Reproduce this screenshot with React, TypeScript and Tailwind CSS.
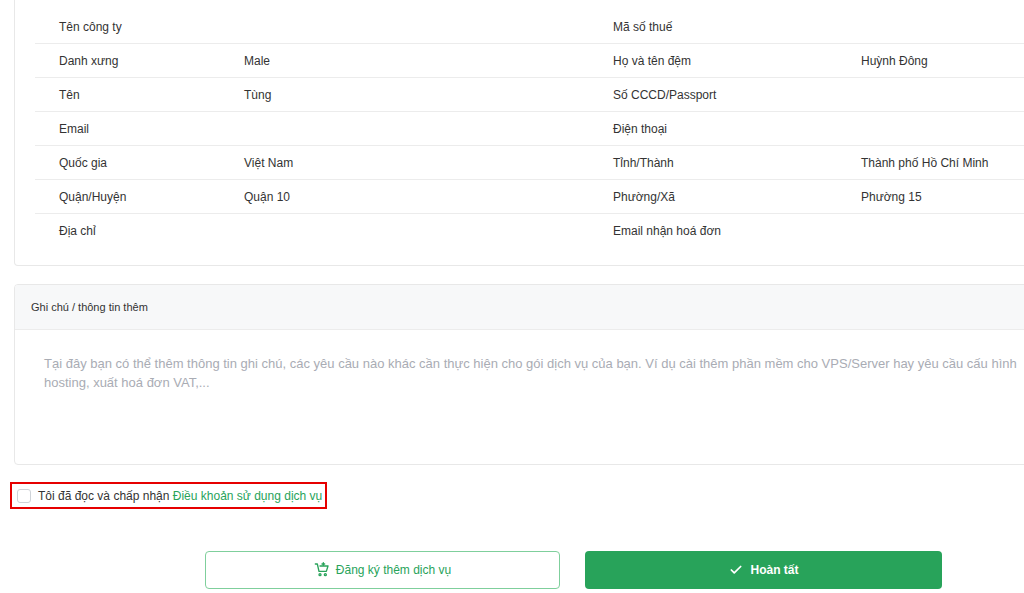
import React from "react";

const rows: [string, string, string, string][] = [
  ["Tên công ty", "", "Mã số thuế", ""],
  ["Danh xưng", "Male", "Họ và tên đệm", "Huỳnh Đông"],
  ["Tên", "Tùng", "Số CCCD/Passport", ""],
  ["Email", "", "Điện thoại", ""],
  ["Quốc gia", "Việt Nam", "Tỉnh/Thành", "Thành phố Hồ Chí Minh"],
  ["Quận/Huyện", "Quận 10", "Phường/Xã", "Phường 15"],
  ["Địa chỉ", "", "Email nhận hoá đơn", ""],
];

export default function App() {
  return (
    <div className="w-[1024px] h-[593px] overflow-hidden bg-white text-[12px] text-[#333]" style={{ fontFamily: '"Liberation Sans", Arial, sans-serif' }}>
      <div className="ml-[14px] w-[1080px] border border-t-0 border-[#e8e8e8] rounded-b-[4px] pl-[20px] pt-[10px] pb-[17px]">
        {rows.map((r, i) => (
          <div key={i} className={`flex h-[34px] items-center ${i < rows.length - 1 ? "border-b border-[#ececec]" : ""}`}>
            <div className="w-[209px] pl-[24px]">{r[0]}</div>
            <div className="w-[369px]">{r[1]}</div>
            <div className="w-[248px]">{r[2]}</div>
            <div>{r[3]}</div>
          </div>
        ))}
      </div>
      <div className="ml-[14px] mt-[18px] w-[1080px] h-[181px] border border-[#e8e8e8] rounded-[4px] overflow-hidden">
        <div className="h-[45px] bg-[#f7f8f9] border-b border-[#ececec] flex items-center pl-[16px] text-[11px] text-[#333]">Ghi chú / thông tin thêm</div>
        <div className="pl-[29px] pt-[24px] text-[13px] leading-[19px] text-[#a9acb4] w-[1030px]">
          Tại đây bạn có thể thêm thông tin ghi chú, các yêu cầu nào khác cần thực hiện cho gói dịch vụ của bạn. Ví dụ cài thêm phần mềm cho VPS/Server hay yêu cầu cấu hình hosting, xuất hoá đơn VAT,...
        </div>
      </div>
      <div className="ml-[10px] mt-[17px] w-[317px] h-[27px] border-2 border-[#e60000] flex items-center pl-[5px] gap-[7px]">
        <div className="w-[14px] h-[14px] border border-[#cfd3d8] rounded-[3px] bg-white" />
        <span>Tôi đã đọc và chấp nhận <span className="text-[#28a35a]">Điều khoản sử dụng dịch vụ</span></span>
      </div>
      <div className="mt-[42px] flex ml-[205px] gap-[25px]">
        <div className="w-[355px] h-[38px] border border-[#7fcf9c] rounded-[4px] flex items-center justify-center gap-[6px] text-[#28a35a] text-[12px]">
          <svg width="16" height="16" viewBox="0 0 24 24" fill="none" stroke="#28a35a" strokeWidth="2" strokeLinecap="round" strokeLinejoin="round">
            <path d="M2 3h3l2.5 11h11L21 6H9" />
            <circle cx="9" cy="19" r="1.5" />
            <circle cx="17" cy="19" r="1.5" />
            <path d="M14 5V1M12 3h4" />
          </svg>
          Đăng ký thêm dịch vụ
        </div>
        <div className="w-[357px] h-[38px] bg-[#28a35a] rounded-[4px] flex items-center justify-center gap-[8px] text-white text-[12px] font-bold">
          <svg width="14" height="14" viewBox="0 0 24 24" fill="none" stroke="white" strokeWidth="3" strokeLinecap="round" strokeLinejoin="round">
            <path d="M4 12l5 5L20 6" />
          </svg>
          Hoàn tất
        </div>
      </div>
    </div>
  );
}
